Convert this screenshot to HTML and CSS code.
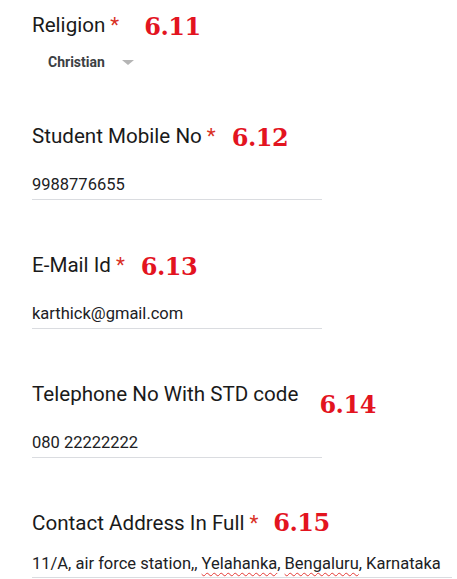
FILE: index.html
```html
<!DOCTYPE html>
<html lang="en">
<head>
    <meta charset="UTF-8">
    <meta name="viewport" content="width=device-width, initial-scale=1.0">
    <title>Student Details</title>
    <link rel="stylesheet" href="styles.css">
</head>
<body>

<div class="form">

    <!-- 6.11 Religion -->
    <div class="question question-select">
        <div class="question-title">
            <span>Religion</span><span class="required">*</span>
            <span class="tag tag-wide">6.11</span>
        </div>
        <div class="dropdown">
            <span class="dropdown-text">Christian</span>
            <span class="dropdown-arrow"></span>
        </div>
    </div>

    <!-- 6.12 Mobile -->
    <div class="question">
        <div class="question-title">
            <span>Student Mobile No</span><span class="required">*</span>
            <span class="tag">6.12</span>
        </div>
        <div class="answer">9988776655</div>
    </div>

    <!-- 6.13 Email -->
    <div class="question">
        <div class="question-title">
            <span>E-Mail Id</span><span class="required">*</span>
            <span class="tag">6.13</span>
        </div>
        <div class="answer">karthick@gmail.com</div>
    </div>

    <!-- 6.14 Telephone -->
    <div class="question">
        <div class="question-title">
            <span>Telephone No With STD code</span>
            <span class="tag tag-low">6.14</span>
        </div>
        <div class="answer">080 22222222</div>
    </div>

    <!-- 6.15 Address -->
    <div class="question question-last">
        <div class="question-title">
            <span>Contact Address In Full</span><span class="required">*</span>
            <span class="tag tag-high">6.15</span>
        </div>
        <div class="answer answer-long">11/A, air force station,, <span class="misspelt">Yelahanka</span>, <span class="misspelt">Bengaluru</span>, Karnataka</div>
    </div>

</div>

</body>
</html>
```

FILE: styles.css
```css
body {
    margin: 0;
    padding: 0;
    background-color: #ffffff;
    font-family: Roboto, "Liberation Sans", Arial, sans-serif;
    color: #202124;
    overflow: hidden;
}
.form {
    padding: 13px 0 0 32px;
}
.question {
    margin-bottom: 53px;
}
.question-title {
    display: flex;
    align-items: baseline;
    font-size: 20.6px;
    line-height: 24px;
    color: #1a1a1a;
}
.required {
    color: #d93025;
    margin-left: 5px;
}
/* numeros de referencia en rojo */
.tag {
    font-family: "DejaVu Serif", "Liberation Serif", serif;
    font-weight: bold;
    font-size: 24px;
    line-height: 20px;
    letter-spacing: -0.5px;
    color: #e3141f;
    margin-left: 16px;
    position: relative;
    top: 3px;
}
.tag-wide {
    margin-left: 25px;
}
.tag-low {
    margin-left: 21px;
    top: 12px;
}
.tag-high {
    margin-left: 15px;
    top: 1px;
}
.dropdown {
    display: flex;
    align-items: center;
    margin: 15px 0 0 16px;
    height: 20px;
}
.dropdown-text {
    font-size: 14px;
    font-weight: bold;
    color: #3c4043;
}
.dropdown-arrow {
    width: 0;
    height: 0;
    margin-left: 17px;
    border-left: 6px solid transparent;
    border-right: 6px solid transparent;
    border-top: 5px solid #b5b5b5;
}
.question-select {
    margin-bottom: 52px;
}
.answer {
    width: 290px;
    margin-top: 25px;
    font-size: 16.5px;
    line-height: 24px;
    padding-bottom: 2px;
    border-bottom: 1px solid #dadce0;
    white-space: nowrap;
}
.answer-long {
    width: 420px;
    margin-top: 17px;
    padding-bottom: 1px;
}
.misspelt {
    text-decoration: underline wavy #e53935;
    text-decoration-thickness: 1px;
    text-underline-offset: 3px;
}
```
